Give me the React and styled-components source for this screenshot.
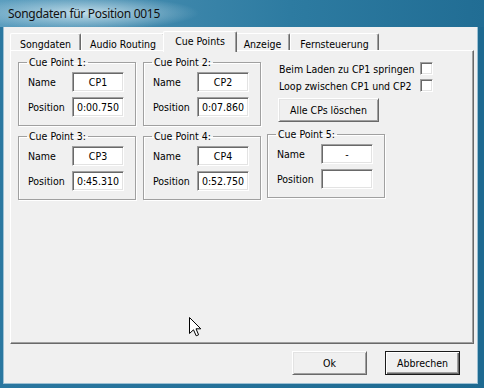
import React from "react";
import styled, { createGlobalStyle } from "styled-components";

const UI_FONT = `"DejaVu Sans Condensed", "Liberation Sans", Arial, sans-serif`;

const GlobalStyle = createGlobalStyle`
  html, body { margin: 0; padding: 0; background: #1f6b92; }
  body { width: 484px; height: 388px; overflow: hidden; }
  #root { width: 484px; height: 388px; }
  * { box-sizing: border-box; }
`;

const Window = styled.div`
  position: relative;
  width: 484px;
  height: 388px;
  display: flex;
  flex-direction: column;
  background: linear-gradient(90deg, #2a77a0 0%, #1e6a91 100%);
  font-family: ${UI_FONT};
  font-size: 10.5px;
  color: #000;
`;

const TitleBar = styled.div`
  height: 27px;
  flex: none;
  display: flex;
  align-items: center;
  padding: 0 0 1px 8px;
  background:
    radial-gradient(ellipse 115px 17px at 84px 13px, rgba(205, 228, 238, 0.9), rgba(205, 228, 238, 0) 100%),
    linear-gradient(90deg, #5c9ebf 0%, #4189ad 30%, #2d7ba1 60%, #216d94 100%);
  font-family: "Noto Sans", "Open Sans", sans-serif;
  font-size: 12px;
  letter-spacing: -0.3px;
  color: #111;
`;

const Frame = styled.div`
  flex: 1;
  display: flex;
  padding: 0 6px 4px 3px;
`;

const Client = styled.div`
  flex: 1;
  display: flex;
  flex-direction: column;
  background: #f0f0f0;
  border: 1px solid #9cc0d3;
  border-top: none;
  padding: 4px 3px 0 6px;
`;

const TabStrip = styled.div`
  position: relative;
  z-index: 1;
  display: flex;
  height: 19px;
`;

const Tab = styled.div`
  position: relative;
  width: ${(p) => p.$w}px;
  flex: none;
  display: flex;
  align-items: center;
  justify-content: center;
  background: #f0f0f0;
  border: 1px solid #696969;
  border-top-color: #fff;
  border-left-color: #fff;
  border-bottom: none;
  border-radius: 2px 2px 0 0;
  box-shadow: inset -1px 0 0 #a0a0a0;
  align-self: ${(p) => (p.$active ? "flex-start" : "flex-end")};
  height: ${(p) => (p.$active ? 21 : 17)}px;
  margin: ${(p) => (p.$active ? "0 -2px -2px -2px" : "0")};
  padding: ${(p) => (p.$active ? "0 0 2px 0" : "3px 0 0 0")};
  z-index: ${(p) => (p.$active ? 2 : 1)};
  white-space: nowrap;
`;

const Panel = styled.div`
  flex: 1;
  border: 1px solid #696969;
  border-top-color: #fff;
  border-left-color: #fff;
  box-shadow: inset -1px -1px 0 #a0a0a0;
  padding: 4px 0 0 7px;
`;

const Grid = styled.div`
  display: grid;
  grid-template-columns: 118px 118px 117px;
  column-gap: 7px;
  row-gap: 3px;
  align-items: start;
`;

const Group = styled.fieldset`
  margin: ${(p) => (p.$lift ? "-2px 0 0 -1px" : "0")};
  min-width: 0;
  padding: 3px 0 8px 9px;
  border: 1px solid #a0a0a0;
  box-shadow: inset 1px 1px 0 #fff, 1px 1px 0 #fff;
`;

const Legend = styled.legend`
  margin-left: -1px;
  padding: 0 2px;
  line-height: 14px;
`;

const FieldGrid = styled.div`
  display: grid;
  grid-template-columns: 44px 52px;
  row-gap: 5px;
  align-items: center;
`;

const FieldLabel = styled.span`
  white-space: nowrap;
`;

const TextBox = styled.input`
  width: 52px;
  height: 20px;
  margin: 0;
  padding: 0;
  text-align: center;
  font-family: ${UI_FONT};
  font-size: 10.5px;
  color: #000;
  background: #fff;
  border: 1px solid #fff;
  border-top-color: #a0a0a0;
  border-left-color: #a0a0a0;
  box-shadow: inset 1px 1px 0 #696969, inset -1px -1px 0 #e3e3e3;
  outline: none;
`;

const Options = styled.div`
  display: flex;
  flex-direction: column;
  padding: 5px 0 0 11px;
`;

const CheckRow = styled.label`
  width: 154px;
  height: 17px;
  display: flex;
  align-items: center;
  justify-content: space-between;
  white-space: nowrap;
`;

const CheckBox = styled.span`
  width: 13px;
  height: 13px;
  flex: none;
  background: #fff;
  border: 1px solid #fff;
  border-top-color: #a0a0a0;
  border-left-color: #a0a0a0;
  box-shadow: inset 1px 1px 0 #696969, inset -1px -1px 0 #e3e3e3;
`;

const PushButton = styled.button`
  width: ${(p) => p.$w}px;
  height: 24px;
  margin: 0;
  padding: 0;
  font-family: ${UI_FONT};
  font-size: 10.5px;
  color: #000;
  background: #f0f0f0;
  border: 1px solid ${(p) => (p.$default ? "#1a1a1a" : "#696969")};
  border-top-color: ${(p) => (p.$default ? "#1a1a1a" : "#fff")};
  border-left-color: ${(p) => (p.$default ? "#1a1a1a" : "#fff")};
  box-shadow: ${(p) =>
    p.$default
      ? "inset 1px 1px 0 #fff, inset -1px -1px 0 #696969, inset -2px -2px 0 #a0a0a0"
      : "inset 1px 1px 0 #e3e3e3, inset -1px -1px 0 #a0a0a0"};
`;

const ClearButton = styled(PushButton)`
  margin: 4px 0 0 -1px;
`;

const ButtonRow = styled.div`
  flex: none;
  display: flex;
  justify-content: flex-end;
  gap: 18px;
  padding: 7px 14px 8px 0;
`;

const Cursor = styled.svg`
  position: absolute;
  left: 189px;
  top: 317px;
  pointer-events: none;
`;

const cuePoints = [
  { n: 1, name: "CP1", pos: "0:00.750" },
  { n: 2, name: "CP2", pos: "0:07.860" },
  { n: 3, name: "CP3", pos: "0:45.310" },
  { n: 4, name: "CP4", pos: "0:52.750" },
  { n: 5, name: "-", pos: "" },
];

const tabs = [
  { label: "Songdaten", w: 71 },
  { label: "Audio Routing", w: 84 },
  { label: "Cue Points", w: 74, active: true },
  { label: "Anzeige", w: 55 },
  { label: "Fernsteuerung", w: 89 },
];

function CueGroup({ cp, lift }) {
  return (
    <Group $lift={lift}>
      <Legend>Cue Point {cp.n}:</Legend>
      <FieldGrid>
        <FieldLabel>Name</FieldLabel>
        <TextBox readOnly value={cp.name} />
        <FieldLabel>Position</FieldLabel>
        <TextBox readOnly value={cp.pos} />
      </FieldGrid>
    </Group>
  );
}

export default function App() {
  return (
    <>
      <GlobalStyle />
      <Window>
        <TitleBar>Songdaten für Position 0015</TitleBar>
        <Frame>
          <Client>
            <TabStrip>
              {tabs.map((t) => (
                <Tab key={t.label} $w={t.w} $active={t.active}>
                  {t.label}
                </Tab>
              ))}
            </TabStrip>
            <Panel>
              <Grid>
                <CueGroup cp={cuePoints[0]} />
                <CueGroup cp={cuePoints[1]} />
                <Options>
                  <CheckRow>
                    Beim Laden zu CP1 springen
                    <CheckBox />
                  </CheckRow>
                  <CheckRow>
                    Loop zwischen CP1 und CP2
                    <CheckBox />
                  </CheckRow>
                  <ClearButton $w={101}>Alle CPs löschen</ClearButton>
                </Options>
                <CueGroup cp={cuePoints[2]} />
                <CueGroup cp={cuePoints[3]} />
                <CueGroup cp={cuePoints[4]} lift />
              </Grid>
            </Panel>
            <ButtonRow>
              <PushButton $w={75}>Ok</PushButton>
              <PushButton $w={75} $default>
                Abbrechen
              </PushButton>
            </ButtonRow>
          </Client>
        </Frame>
        <Cursor width="13" height="20" viewBox="0 0 13 20">
          <path
            d="M0.5 0.5 L0.5 16.5 L4.5 12.8 L7.2 18.8 L9.6 17.8 L7 11.8 L11.8 11.8 Z"
            fill="#fff"
            stroke="#000"
            strokeWidth="1"
            strokeLinejoin="miter"
          />
        </Cursor>
      </Window>
    </>
  );
}
